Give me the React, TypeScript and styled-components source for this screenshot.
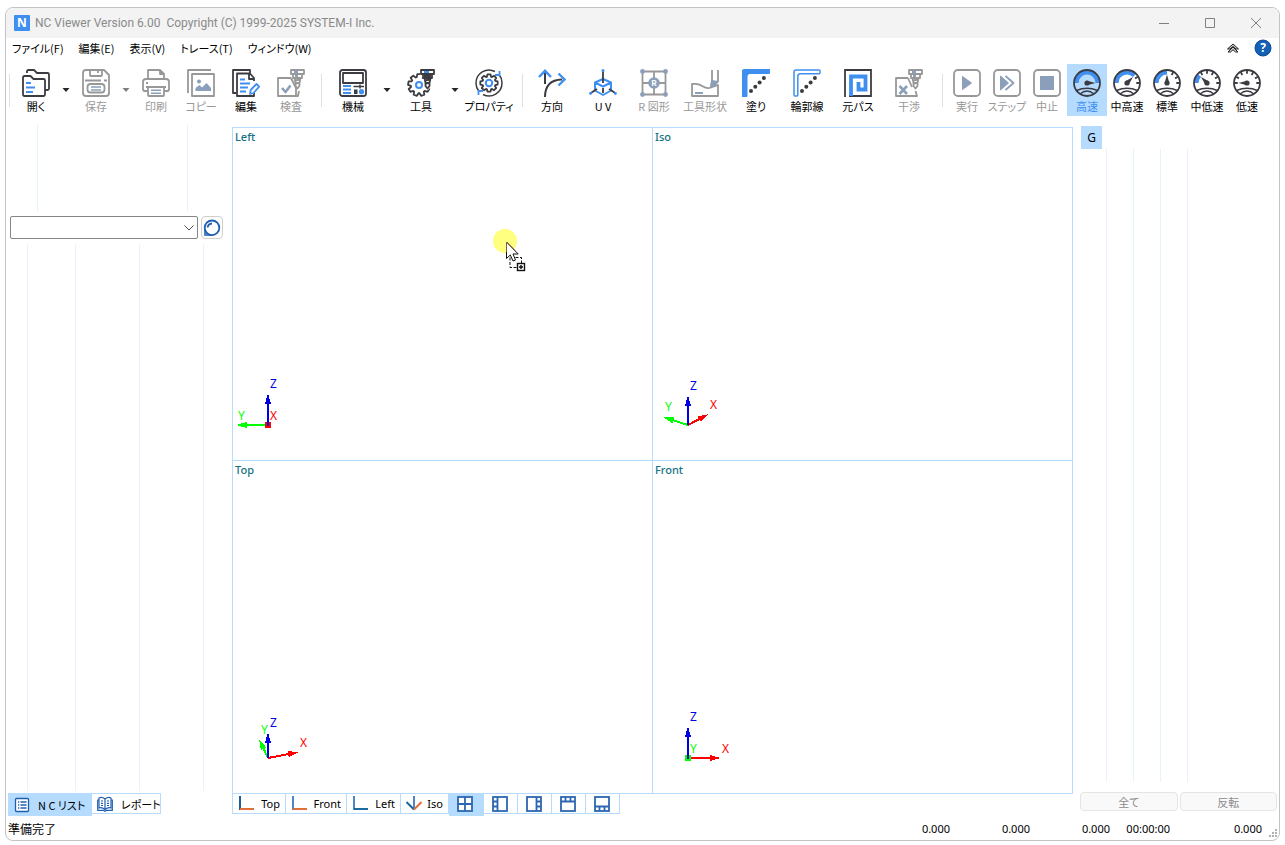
import React from "react";
import styled, { createGlobalStyle, css } from "styled-components";

const LINE = "#b5dbff";
const FAINT = "#e6f2fc";
const BLUE = "#1f5fb0";

const Global = createGlobalStyle`
  *, *::before, *::after { box-sizing: border-box; }
  body {
    margin: 0;
    background: #fff;
    color: #000;
    font-family: "Noto Sans", "Noto Sans CJK JP", sans-serif;
    font-size: 11px;
    font-feature-settings: "palt";
  }
  button { font: inherit; font-feature-settings: inherit; color: inherit; border: 0; padding: 0; background: none; }
  svg { display: block; flex: none; }
`;

const Frame = styled.div`
  padding: 7px 5px 4px;
  min-height: 100vh;
  display: flex;
`;

const Window = styled.div`
  flex: 1;
  min-width: 0;
  display: flex;
  flex-direction: column;
  border: 1px solid #c3c3c3;
  border-radius: 8px;
  overflow: hidden;
  background: #fff;
`;

/* ---------- title bar ---------- */

const TitleBar = styled.header`
  display: flex;
  align-items: center;
  height: 30px;
  padding-left: 8px;
  background: #f3f3f3;
  color: #8a8a8a;
`;

const Logo = styled.span`
  width: 16px;
  height: 16px;
  border-radius: 1px;
  background: #3f8ff0;
  color: #fff;
  font-weight: 700;
  font-size: 12px;
  line-height: 16px;
  text-align: center;
`;

const Title = styled.h1`
  flex: 1;
  margin: 0 0 0 5px;
  font-family: Roboto, "Noto Sans", sans-serif;
  font-size: 12px;
  font-weight: 400;
  line-height: 16px;
  white-space: pre;
`;

const CaptionButton = styled.button`
  width: 46px;
  height: 30px;
  display: grid;
  place-items: center;
`;

/* ---------- menu ---------- */

const MenuBar = styled.nav`
  display: flex;
  align-items: center;
  gap: 15px;
  height: 20px;
  padding: 0 7px 0 6px;
`;

const MenuItem = styled.button`
  font-family: "Noto Sans CJK JP", sans-serif;
  font-size: 11px;
  line-height: 20px;
  white-space: nowrap;
`;

const MenuTools = styled.div`
  display: flex;
  align-items: center;
  gap: 14px;
  height: 18px;
  margin-left: auto;
`;

/* ---------- toolbar ---------- */

const Toolbar = styled.div`
  display: flex;
  align-items: flex-start;
  padding: 6px 0 1px 3px;
  height: 59px;
`;

const ToolGroup = styled.div<{ $gap: number }>`
  display: flex;
  gap: ${(p) => p.$gap}px;
`;

const ToolSeparator = styled.span<{ $before?: number; $after?: number }>`
  width: 1px;
  height: 33px;
  margin: 10px ${(p) => p.$after ?? 4}px 0 ${(p) => p.$before ?? 8}px;
  background: #dcdfe4;
`;

const ToolButton = styled.button<{ $width: number; $active?: boolean }>`
  --ink: #3b3b42;
  --accent: #3f8ff0;
  width: ${(p) => p.$width}px;
  height: 52px;
  padding-top: 5px;
  display: flex;
  flex-direction: column;
  align-items: center;
  white-space: nowrap;
  line-height: 18px;
  font-family: "Noto Sans CJK JP", sans-serif;
  &:disabled {
    --ink: #989898;
    --accent: #8b9fba;
    color: #989898;
  }
  ${(p) =>
    p.$active &&
    css`
      background: ${LINE};
      color: #3f8ff0;
    `}
`;

const DropButton = styled.button<{ $width: number }>`
  width: ${(p) => p.$width}px;
  height: 52px;
  display: grid;
  place-items: center;
  color: #26262c;
  &:disabled { color: #808080; }
`;

/* ---------- body ---------- */

const Body = styled.main`
  flex: 1;
  display: flex;
  min-height: 0;
`;

const LeftPane = styled.aside`
  width: 226px;
  display: flex;
  flex-direction: column;
  padding-top: 8px;
`;

const Columns = styled.div<{ $height?: number }>`
  display: flex;
  ${(p) => (p.$height ? `height: ${p.$height}px;` : "flex: 1;")}
`;

const Column = styled.div<{ $width: number }>`
  width: ${(p) => p.$width}px;
  border-right: 1px solid ${FAINT};
`;

const PickerRow = styled.div`
  display: flex;
  gap: 3px;
  padding: 5px 9px 5px 4px;
`;

const PickerBox = styled.label`
  position: relative;
  flex: 1;
  height: 23px;
  svg {
    position: absolute;
    right: 4px;
    top: 9px;
    pointer-events: none;
  }
`;

const Picker = styled.select`
  appearance: none;
  width: 100%;
  height: 23px;
  border: 1px solid #858585;
  border-radius: 2px;
  background: #fff;
`;

const RoundButton = styled.button`
  width: 22px;
  height: 23px;
  border: 1px solid #cfcfcf;
  border-radius: 4px;
  background: #fdfdfd;
  display: grid;
  place-items: center;
`;

const LeftTabs = styled.div`
  display: flex;
  align-items: flex-start;
  height: 24px;
  margin-top: 2px;
  padding-left: 2px;
`;

const LeftTab = styled.button<{ $active?: boolean }>`
  display: flex;
  align-items: center;
  gap: 8px;
  font-family: "Noto Sans CJK JP", sans-serif;
  line-height: 18px;
  white-space: nowrap;
  ${(p) =>
    p.$active
      ? css`
          width: 84px;
          height: 23px;
          padding-left: 6px;
          background: ${LINE};
        `
      : css`
          width: 69px;
          height: 21px;
          padding-left: 5px;
          border: 1px solid ${LINE};
          border-left: 0;
        `}
`;

const Center = styled.section`
  flex: 1;
  min-width: 0;
  display: flex;
  flex-direction: column;
  padding-top: 10px;
`;

const Views = styled.div`
  flex: 1;
  display: grid;
  grid-template: 1fr 1fr / 1fr 1fr;
  gap: 1px;
  border: 1px solid ${LINE};
  background: ${LINE};
`;

const View = styled.div`
  position: relative;
  background: #fff;
  display: flex;
  flex-direction: column;
  justify-content: space-between;
`;

const ViewName = styled.span`
  padding-left: 2px;
  line-height: 18px;
  font-weight: 500;
  color: #157284;
`;

const Pointer = styled.svg`
  position: absolute;
  left: 260px;
  top: 101px;
`;

const ViewTabs = styled.div`
  display: flex;
  align-items: flex-start;
  height: 23px;
`;

const ViewTab = styled.button<{ $width: number; $active?: boolean; $first?: boolean }>`
  width: ${(p) => p.$width}px;
  height: ${(p) => (p.$active ? 22 : 20)}px;
  display: flex;
  align-items: flex-start;
  justify-content: ${(p) => (p.$active ? "center" : "space-between")};
  padding: 2px 5px 0;
  border: solid ${LINE};
  border-width: ${(p) => (p.$active ? "0" : p.$first ? "0 1px 1px 1px" : "0 1px 1px 0")};
  background: ${(p) => (p.$active ? LINE : "#fff")};
  line-height: 16px;
`;

const LayoutTab = styled(ViewTab)`
  justify-content: flex-start;
  padding-left: 8px;
`;

const RightPane = styled.aside`
  width: 206px;
  display: flex;
  flex-direction: column;
  padding: 9px 2px 6px 7px;
`;

const CodeTab = styled.button`
  width: 21px;
  height: 23px;
  margin-left: 1px;
  background: ${LINE};
  font-size: 12px;
  line-height: 16px;
`;

const ActionRow = styled.div`
  display: grid;
  grid-template-columns: 1fr 1fr;
  gap: 2px;
  margin-top: 10px;
`;

const ActionButton = styled.button`
  height: 19px;
  border: 1px solid #e5e5e5;
  border-radius: 4px;
  background: #f9f9f9;
  color: #8a8a8a;
  font-family: "Noto Sans CJK JP", sans-serif;
  font-size: 11px;
  line-height: 16px;
`;

/* ---------- status bar ---------- */

const StatusBar = styled.footer`
  display: flex;
  align-items: center;
  height: 23px;
  padding-left: 2px;
`;

const StatusText = styled.span`
  flex: 1;
  font-family: "Noto Sans CJK JP", sans-serif;
  font-size: 12px;
  line-height: 18px;
`;

const StatusCell = styled.span<{ $width: number }>`
  width: ${(p) => p.$width}px;
  text-align: right;
`;

const Grip = styled.svg`
  align-self: flex-end;
  margin: 0 1px 2px 7px;
`;

/* ---------- icons ---------- */

const I = "var(--ink)";
const A = "var(--accent)";

function Icon({ children }: { children: React.ReactNode }) {
  return (
    <svg width="28" height="28" viewBox="0 0 28 28" fill="none" stroke={I} strokeWidth="1.8" strokeLinejoin="round" aria-hidden="true">
      {children}
    </svg>
  );
}

const OpenIcon = () => (
  <Icon>
    <path d="M5 4V2.500Q5 1 6.500 1H12L15 4H25.500Q27 4 27 5.500V19.500Q27 21 25.500 21H23" />
    <path d="M1 8.500Q1 7 2.500 7H8.500L11.500 10H21.500Q23 10 23 11.500V25.500Q23 27 21.500 27H2.500Q1 27 1 25.500Z" />
    <path d="M4 14H9M4 18.500H13M4 23H11" stroke={A} />
  </Icon>
);

const SaveIcon = () => (
  <Icon>
    <path d="M1 4Q1 1 4 1H22L27 6V24Q27 27 24 27H4Q1 27 1 24Z" />
    <path d="M8 1V6.500Q8 7 9 7H19Q20 7 20 6V1M16 1V4" />
    <path d="M3 11.500H19M22 11.500H25" />
    <rect x="5.500" y="15" width="17" height="8.500" rx="3" />
    <path d="M9 18H19M9 21H19" stroke={A} strokeWidth="1.400" />
  </Icon>
);

const PrintIcon = () => (
  <Icon>
    <path d="M6 10V1H18L22 5V10M18 1V5H22" />
    <path d="M6 22H2.500Q1 22 1 20V13Q1 10 4 10H24Q27 10 27 13V20Q27 22 25.500 22H22" />
    <path d="M4 14H6M4 18H24" />
    <rect x="6" y="18" width="16" height="9" rx="1" />
    <path d="M9 21.200H19M9 24.200H19" stroke={A} strokeWidth="1.400" />
  </Icon>
);

const CopyIcon = () => (
  <Icon>
    <path d="M1 24V1H24" />
    <rect x="5" y="5" width="22" height="22" />
    <circle cx="12" cy="12.500" r="2" fill={A} stroke="none" />
    <path d="M8.500 22V19L12.500 16L15 18.500L19.500 14L24 19V22Z" fill={A} stroke="none" />
  </Icon>
);

const EditIcon = () => (
  <Icon>
    <path d="M4 24H1V1H18V4" />
    <path d="M22 12V9L18 4.500H5V27H22V24M17 5V10H22" />
    <path d="M8 10.500H13M8 14.500H18M8 18.500H16M8 22.500H14" stroke={A} />
    <path d="M18 25L18.700 21L24.500 15L27.200 17.700L21.500 24Z" stroke={A} fill="#fff" />
  </Icon>
);

const Drill = () => (
  <>
    <path d="M14 1H27V5H14Z" />
    <path d="M16 5V9H25V5M17.500 9L18.500 14H22.500L23.500 9M18.500 14V17L20.500 19.500L22.500 17V14" />
    <path d="M17 3H21M18 7H21" stroke={A} />
    <path d="M18 11.500L23 10.500M18.500 15L22.500 13.500" />
  </>
);

const InspectIcon = () => (
  <Icon>
    <path d="M14 9H1V27H21L22 22" />
    <path d="M14 9L19 19V27" />
    <path d="M5 19L8.500 23L13.500 16.500" stroke={A} strokeWidth="2.600" />
    <Drill />
  </Icon>
);

const MachineIcon = () => (
  <Icon>
    <rect x="1" y="1" width="26" height="26" rx="2.500" />
    <rect x="4" y="4" width="20" height="10" />
    <path d="M4 17H12M4 20.500H12M4 24H12" stroke={A} />
    <path d="M14.500 17.500H25M21 15.500V19.500" strokeWidth="1.500" />
    <rect x="15" y="20.500" width="3.500" height="4.500" fill={I} stroke="none" />
    <circle cx="22.500" cy="22.700" r="2.600" fill={A} stroke="none" />
  </Icon>
);

const gearPath = (cx: number, cy: number, outer: number, inner: number, teeth: number) => {
  const points: string[] = [];
  for (let t = 0; t < teeth; t++) {
    const a = (t / teeth) * Math.PI * 2;
    const w = Math.PI / teeth;
    [
      [inner, -w * 0.8],
      [outer, -w * 0.45],
      [outer, w * 0.45],
      [inner, w * 0.8],
    ].forEach(([r, o]) => points.push(`${(cx + r * Math.sin(a + o)).toFixed(2)} ${(cy - r * Math.cos(a + o)).toFixed(2)}`));
  }
  return `M${points.join("L")}Z`;
};

const ToolIcon = () => (
  <Icon>
    <path d={gearPath(12, 16, 11, 8.2, 9)} />
    <circle cx="12" cy="16" r="3" stroke={A} strokeWidth="2" />
    <path d="M13 0H28V5L25 17L21 21L17 17V9H13Z" fill="#fff" stroke="none" />
    <path d="M14 1H27V5H14Z" />
    <path d="M16 5V9H25V5M17.500 9L18.500 14H22.500L23.500 9M18.500 14V17L20.500 19.500L22.500 17V14" />
    <path d="M17 3H22" stroke={A} />
    <path d="M17 7H24M18 11.500L23 10.500M18.500 15L22.500 13.500" />
  </Icon>
);

const PropertyIcon = () => (
  <Icon>
    <path d={gearPath(14, 14, 8.8, 6.6, 8)} />
    <circle cx="14" cy="14" r="3.200" stroke={A} strokeWidth="2" />
    <path d="M4 22.500A13 13 0 0 1 1 14A13 13 0 0 1 20 2.500M24 5.500A13 13 0 0 1 27 14A13 13 0 0 1 8 25.500" strokeWidth="1.500" />
    <path d="M24.500 2V6H20M3.500 26V22H8" stroke={A} />
  </Icon>
);

const DirectionIcon = () => (
  <Icon>
    <path d="M7 15V3M7 28Q7 11 24 10.500" strokeWidth="2" />
    <path d="M1 8L7 1.800L13 8M20.500 4.500L26.500 10.500L20.500 16.500" stroke={A} strokeWidth="2.400" strokeLinejoin="miter" />
  </Icon>
);

const UvIcon = () => (
  <Icon>
    <path d="M6 13.500L14 10L22 13.500V21.500L14 26L6 21.500ZM6 13.500L14 17.500L22 13.500" stroke={A} strokeWidth="2" />
    <path d="M14 2V14M14 19V24M8 20L1 24.500M20 20L27 24.500" />
    <circle cx="14" cy="1.600" r="1.500" fill={A} stroke="none" />
    <circle cx="1.600" cy="24.500" r="1.400" fill={A} stroke="none" />
    <circle cx="26.400" cy="24.500" r="1.400" fill={A} stroke="none" />
  </Icon>
);

const RShapeIcon = () => (
  <Icon>
    <path d="M2.500 2.500H25.500V25.500H2.500ZM14 2.500V9M14 19V25.500M2.500 14H9M19 14H25.500" />
    <circle cx="14" cy="14" r="5.800" fill={A} stroke="none" />
    <text x="14" y="17" textAnchor="middle" fontSize="8" fontWeight="700" fill="#fff" stroke="none">R</text>
    {[2.5, 25.5].map((x) => [2.5, 25.5].map((y) => <circle key={`${x}-${y}`} cx={x} cy={y} r="2.400" fill={A} stroke="none" />))}
  </Icon>
);

const ToolShapeIcon = () => (
  <Icon>
    <path d="M21 1V12L20 18L24 16L27 12V1" />
    <path d="M1 15Q8 14 12 17.500Q16 20 20 18.500L27 16V27H1Z" />
    <path d="M4 24H12" stroke={A} />
    <path d="M20 18L21 12L26.500 13Z" fill={A} stroke={A} />
  </Icon>
);

const Dots = () => (
  <>
    {[0, 1, 2, 3].map((n) => (
      <circle key={n} cx={9 + n * 4.3} cy={22 - n * 4.3} r="2" fill={I} stroke="none" />
    ))}
  </>
);

const FillIcon = () => (
  <Icon>
    <path d="M0 2Q0 0 2 0H28V4Q28 5 27 5H8Q5.500 5 5.500 8V27Q5.500 28 4.500 28H0Z" fill={A} stroke="none" />
    <Dots />
  </Icon>
);

const OutlineIcon = () => (
  <Icon>
    <path d="M1 3Q1 1 3 1H26Q27 1 27 2V3.800Q27 4.800 26 4.800H7.500Q4.800 4.800 4.800 7.500V26Q4.800 27 3.800 27H2Q1 27 1 26Z" stroke={A} strokeWidth="1.500" />
    <Dots />
  </Icon>
);

const PathIcon = () => (
  <Icon>
    <path d="M1 28V1H27V27H5" strokeLinejoin="miter" />
    <path d="M7 27V7.500H21.500V20.500H14.500V13" stroke={A} strokeWidth="3.800" strokeLinejoin="miter" />
  </Icon>
);

const CollisionIcon = () => (
  <Icon>
    <path d="M13 9H1V27H22L20.500 22M13 9L17 18" />
    <path d="M4.500 17L12 25M12 17L4.500 25" stroke={A} strokeWidth="2.600" />
    <Drill />
  </Icon>
);

const RunIcon = ({ kind }: { kind: "run" | "step" | "stop" }) => (
  <Icon>
    <rect x="1" y="1" width="26" height="26" rx="4" />
    {kind === "run" && <path d="M9.500 7.500L18.500 14L9.500 20.500Z" fill={A} stroke={A} strokeWidth="1" />}
    {kind === "step" && (
      <>
        <path d="M7.500 7L15.500 14L7.500 21Z" fill={A} stroke={A} strokeWidth="1" />
        <path d="M12.500 7L20.500 14L12.500 21" stroke={A} />
      </>
    )}
    {kind === "stop" && <rect x="7" y="7" width="14" height="14" fill={A} stroke="none" />}
  </Icon>
);

const GaugeIcon = ({ angle }: { angle: number }) => {
  const at = (deg: number, r: number): [number, number] => {
    const a = (deg * Math.PI) / 180;
    return [+(14 + r * Math.cos(a)).toFixed(2), +(14 - r * Math.sin(a)).toFixed(2)];
  };
  const [x1, y1] = at(180, 10.6);
  const [x2, y2] = at(angle, 10.6);
  const ticks = [0, 30, 60, 90, 120, 150, 180].filter((t) => t < angle || angle === 180);
  return (
    <Icon>
      {angle < 180 && <path d={`M${x1} ${y1}A10.600 10.600 0 0 1 ${x2} ${y2}`} stroke={A} strokeWidth="4.400" />}
      <circle cx="14" cy="14" r="13" />
      {ticks.map((t) => (
        <path key={t} d={`M${at(t, 12.5).join(" ")}L${at(t, 9.3).join(" ")}`} />
      ))}
      <path d={`M${at(angle + 90, 2.3).join(" ")}L${at(angle, 8.5).join(" ")}L${at(angle - 90, 2.3).join(" ")}Z`} fill={I} stroke="none" />
      <circle cx="14" cy="14" r="2.600" fill={I} stroke="none" />
      <path d="M3.500 21.500Q14 17 24.500 21.500M7 25Q14 19 21 25" strokeWidth="1.500" />
    </Icon>
  );
};

const ArrowDown = () => (
  <svg width="8" height="4" viewBox="0 0 8 4" aria-hidden="true">
    <path d="M0.500 0H7.500L4 4Z" fill="currentColor" />
  </svg>
);

/* ---------- axis triad ---------- */

type Axis = { name: string; color: string; tip: [number, number]; label: [number, number] };

const RED = "#ff0000";
const GREEN = "#00ff00";
const NAVY = "#0000e6";

const Triad = ({ axes, dot }: { axes: Axis[]; dot?: string }) => (
  <svg width="90" height="90" viewBox="0 0 90 90" fontSize="12" fontFamily='"Noto Sans", sans-serif' shapeRendering="crispEdges">
    {axes.map((axis) => {
      const [tx, ty] = axis.tip;
      const len = Math.hypot(tx - 35, ty - 55);
      const ux = len ? (tx - 35) / len : 0;
      const uy = len ? (ty - 55) / len : 0;
      const bx = tx - ux * 11;
      const by = ty - uy * 11;
      return (
        <g key={axis.name} fill={axis.color}>
          {len > 0 && (
            <>
              <path d={`M35 55L${bx + ux * 6} ${by + uy * 6}`} stroke={axis.color} strokeWidth="2" />
              <path d={`M${tx} ${ty}L${bx - uy * 3} ${by + ux * 3}L${bx + uy * 3} ${by - ux * 3}Z`} />
            </>
          )}
          <text x={axis.label[0]} y={axis.label[1]}>{axis.name}</text>
        </g>
      );
    })}
    {dot && (
      <>
        <circle cx="35" cy="55" r="3.500" fill={dot} />
        <path d="M35 48V56" stroke={NAVY} strokeWidth="2" />
      </>
    )}
  </svg>
);

/* ---------- small icons ---------- */

const AxisTabIcon = ({ up, right }: { up: string; right: string }) => (
  <svg width="16" height="16" viewBox="0 0 16 16" fill="none" strokeWidth="2" aria-hidden="true">
    <path d="M2 0V14" stroke={up} />
    <path d="M2 13H16" stroke={right} />
  </svg>
);

const IsoTabIcon = () => (
  <svg width="16" height="16" viewBox="0 0 16 16" fill="none" strokeWidth="2" aria-hidden="true">
    <path d="M8 0V13" stroke="#4f86c8" />
    <path d="M0.500 6L8 13.500" stroke="#1d6a9e" />
    <path d="M15.500 6L8 13.500" stroke="#e0703a" />
  </svg>
);

const layoutPaths = [
  "M8 1V15M1 8H15",
  "M5.500 1V15M1 5.500H5.500M1 10.500H5.500",
  "M10.500 1V15M10.500 5.500H15M10.500 10.500H15",
  "M1 5.500H15M5.500 1V5.500M10.500 1V5.500",
  "M1 10.500H15M5.500 10.500V15M10.500 10.500V15",
];

const LayoutIcon = ({ d }: { d: string }) => (
  <svg width="16" height="16" viewBox="0 0 16 16" fill="none" stroke="#2c66b0" strokeWidth="1.800" aria-hidden="true">
    <rect x="1" y="1" width="14" height="14" fill="#fff" />
    <path d={d} />
  </svg>
);

const ListIcon = () => (
  <svg width="16" height="16" viewBox="0 0 16 16" fill="none" stroke={BLUE} strokeWidth="1.300" aria-hidden="true">
    <rect x="1.500" y="1.500" width="13" height="13" rx="1" fill="#fff" />
    <path d="M4 5H5.300M6.500 5H12.500M4 8H5.300M6.500 8H12.500M4 11H5.300M6.500 11H12.500" />
  </svg>
);

const BookIcon = () => (
  <svg width="16" height="16" viewBox="0 0 16 16" fill="none" stroke={BLUE} strokeWidth="1.200" aria-hidden="true">
    <path d="M8 3Q5 0.500 2 2V12Q5 11 8 13.500Q11 11 14 12V2Q11 0.500 8 3V13.500" />
    <path d="M2 4H0.700V14.300H6.500L8 15.300L9.500 14.300H15.300V4H14M4 5H6M4 7.300H6M4 9.500H6M10 5H12M10 7.300H12M10 9.500H12" />
  </svg>
);

/* ---------- data ---------- */

type Tool = { label: string; icon: React.ReactNode; off?: boolean; drop?: boolean; active?: boolean };

const fileTools: Tool[] = [
  { label: "開く", icon: <OpenIcon />, drop: true },
  { label: "保存", icon: <SaveIcon />, off: true, drop: true },
  { label: "印刷", icon: <PrintIcon />, off: true },
  { label: "コピー", icon: <CopyIcon />, off: true },
  { label: "編集", icon: <EditIcon /> },
  { label: "検査", icon: <InspectIcon />, off: true },
];

const setupTools: Tool[] = [
  { label: "機械", icon: <MachineIcon />, drop: true },
  { label: "工具", icon: <ToolIcon />, drop: true },
  { label: "プロパティ", icon: <PropertyIcon /> },
];

const drawTools: Tool[] = [
  { label: "方向", icon: <DirectionIcon /> },
  { label: "U V", icon: <UvIcon /> },
  { label: "R 図形", icon: <RShapeIcon />, off: true },
  { label: "工具形状", icon: <ToolShapeIcon />, off: true },
  { label: "塗り", icon: <FillIcon /> },
  { label: "輪郭線", icon: <OutlineIcon /> },
  { label: "元パス", icon: <PathIcon /> },
  { label: "干渉", icon: <CollisionIcon />, off: true },
];

const playTools: Tool[] = [
  { label: "実行", icon: <RunIcon kind="run" />, off: true },
  { label: "ステップ", icon: <RunIcon kind="step" />, off: true },
  { label: "中止", icon: <RunIcon kind="stop" />, off: true },
  { label: "高速", icon: <GaugeIcon angle={0} />, active: true },
  { label: "中高速", icon: <GaugeIcon angle={45} /> },
  { label: "標準", icon: <GaugeIcon angle={90} /> },
  { label: "中低速", icon: <GaugeIcon angle={135} /> },
  { label: "低速", icon: <GaugeIcon angle={180} /> },
];

const Tools = ({ items, width, gap, drop = 14 }: { items: Tool[]; width: number; gap: number; drop?: number }) => (
  <ToolGroup $gap={gap}>
    {items.map((tool) => (
      <React.Fragment key={tool.label}>
        <ToolButton $width={width} $active={tool.active} disabled={tool.off}>
          {tool.icon}
          {tool.label}
        </ToolButton>
        {tool.drop && (
          <DropButton $width={drop} disabled={tool.off} aria-label={`${tool.label} ▼`}>
            <ArrowDown />
          </DropButton>
        )}
      </React.Fragment>
    ))}
  </ToolGroup>
);

const views: { name: string; axes: Axis[]; dot?: string; pointer?: boolean }[] = [
  {
    name: "Left",
    dot: RED,
    pointer: true,
    axes: [
      { name: "Y", color: GREEN, tip: [3, 55], label: [5, 50] },
      { name: "X", color: RED, tip: [35, 55], label: [37, 50] },
      { name: "Z", color: NAVY, tip: [35, 23], label: [37, 18] },
    ],
  },
  {
    name: "Iso",
    axes: [
      { name: "Y", color: GREEN, tip: [10, 47], label: [12, 41] },
      { name: "X", color: RED, tip: [56, 44], label: [57, 39] },
      { name: "Z", color: NAVY, tip: [35, 25], label: [37, 20] },
    ],
  },
  {
    name: "Top",
    axes: [
      { name: "Y", color: GREEN, tip: [26, 36], label: [28, 31] },
      { name: "X", color: RED, tip: [66, 49], label: [67, 44] },
      { name: "Z", color: NAVY, tip: [35, 29], label: [37, 24] },
    ],
  },
  {
    name: "Front",
    dot: GREEN,
    axes: [
      { name: "X", color: RED, tip: [68, 55], label: [69, 50] },
      { name: "Y", color: GREEN, tip: [35, 55], label: [37, 50] },
      { name: "Z", color: NAVY, tip: [35, 23], label: [37, 18] },
    ],
  },
];

const captionButtons = [
  { label: "最小化", d: "M0 5.500H10" },
  { label: "最大化", d: "M0.500 0.500H9.500V9.500H0.500Z" },
  { label: "閉じる", d: "M0 0L10 10M10 0L0 10" },
];

export default function App() {
  return (
    <Frame>
      <Global />
      <Window>
        <TitleBar>
          <Logo>N</Logo>
          <Title>{"NC Viewer Version 6.00  Copyright (C) 1999-2025 SYSTEM-I Inc."}</Title>
          {captionButtons.map((b) => (
            <CaptionButton key={b.label} aria-label={b.label}>
              <svg width="10" height="10" viewBox="0 0 10 10" fill="none" stroke="#808080" aria-hidden="true">
                <path d={b.d} />
              </svg>
            </CaptionButton>
          ))}
        </TitleBar>

        <MenuBar>
          {["ファイル(F)", "編集(E)", "表示(V)", "トレース(T)", "ウィンドウ(W)"].map((m) => (
            <MenuItem key={m}>{m}</MenuItem>
          ))}
          <MenuTools>
            <button aria-label="リボンを折りたたむ">
              <svg width="14" height="10" viewBox="0 0 14 10" fill="#c8c8c8" stroke="#222" aria-hidden="true">
                <path d="M7 1L12.500 6H10L7 3.500L4 6H1.500Z" />
                <path d="M7 4L12 9H9.500L7 6.800L4.500 9H2Z" />
              </svg>
            </button>
            <button aria-label="ヘルプ">
              <svg width="18" height="18" viewBox="0 0 18 18" aria-hidden="true">
                <circle cx="9" cy="9" r="8" fill="#1460b4" stroke="#0b4a94" />
                <text x="9" y="13" textAnchor="middle" fontSize="12" fontWeight="700" fill="#fff">?</text>
              </svg>
            </button>
          </MenuTools>
        </MenuBar>

        <Toolbar>
          <ToolSeparator $before={0} />
          <Tools items={fileTools} width={44} gap={1} />
          <ToolSeparator $after={9} />
          <Tools items={setupTools} width={44} gap={4} drop={16} />
          <ToolSeparator $before={11} />
          <Tools items={drawTools} width={50} gap={1} />
          <ToolSeparator />
          <Tools items={playTools} width={40} gap={0} />
        </Toolbar>

        <Body>
          <LeftPane>
            <Columns $height={86}>
              <Column $width={32} />
              <Column $width={150} />
            </Columns>
            <PickerRow>
              <PickerBox>
                <Picker aria-label="NCリスト" />
                <svg width="10" height="6" viewBox="0 0 10 6" fill="none" stroke="#555" aria-hidden="true">
                  <path d="M0.500 0.500L5 5L9.500 0.500" />
                </svg>
              </PickerBox>
              <RoundButton aria-label="表示">
                <svg width="18" height="18" viewBox="0 0 18 18" fill="none" stroke={BLUE} strokeWidth="1.800" aria-hidden="true">
                  <path d="M1 8V17H11Z" fill="#4f86c8" stroke="none" />
                  <circle cx="9" cy="8.800" r="7.300" fill="#fff" />
                  <path d="M4.500 8.500Q5 5 9 4.500" />
                </svg>
              </RoundButton>
            </PickerRow>
            <Columns>
              {[22, 48, 64, 64].map((w, i) => (
                <Column key={i} $width={w} />
              ))}
            </Columns>
            <LeftTabs>
              <LeftTab $active>
                <ListIcon />N C リスト
              </LeftTab>
              <LeftTab>
                <BookIcon />
                レポート
              </LeftTab>
            </LeftTabs>
          </LeftPane>

          <Center>
            <Views>
              {views.map((v) => (
                <View key={v.name}>
                  <ViewName>{v.name}</ViewName>
                  <Triad axes={v.axes} dot={v.dot} />
                  {v.pointer && (
                    <Pointer width="34" height="44" viewBox="0 0 34 44" aria-hidden="true">
                      <circle cx="12" cy="12" r="12" fill="#ffff80" />
                      <path d="M17 28.500V38.500H24M18 28.500H28.500V34" fill="none" stroke="#111" strokeDasharray="3 1.500" />
                      <path d="M13.500 13V29.500L17.300 26L20 32L22.500 31L20 25H25.200Z" fill="#fff" stroke="#111" />
                      <path d="M13.500 23V13L22 21.500" fill="none" stroke="#8a5a3c" />
                      <rect x="24.500" y="34.500" width="7" height="7" fill="#fff" stroke="#111" strokeWidth="1.400" />
                      <path d="M28 36V40M26 38H30" stroke="#111" strokeWidth="1.400" />
                    </Pointer>
                  )}
                </View>
              ))}
            </Views>
            <ViewTabs>
              <ViewTab $width={54} $first>
                <AxisTabIcon up="#1d5f9e" right="#e0703a" />
                Top
              </ViewTab>
              <ViewTab $width={61}>
                <AxisTabIcon up="#4f86c8" right="#e0703a" />
                Front
              </ViewTab>
              <ViewTab $width={54}>
                <AxisTabIcon up="#4f86c8" right="#1d6a9e" />
                Left
              </ViewTab>
              <ViewTab $width={48}>
                <IsoTabIcon />
                Iso
              </ViewTab>
              {layoutPaths.map((d, i) => (
                <LayoutTab key={d} $width={i === 0 ? 35 : 34} $active={i === 0} aria-label={`Layout ${i + 1}`}>
                  <LayoutIcon d={d} />
                </LayoutTab>
              ))}
            </ViewTabs>
          </Center>

          <RightPane>
            <CodeTab>G</CodeTab>
            <Columns>
              {[0, 1, 2, 3].map((i) => (
                <Column key={i} $width={27} />
              ))}
            </Columns>
            <ActionRow>
              <ActionButton disabled>全て</ActionButton>
              <ActionButton disabled>反転</ActionButton>
            </ActionRow>
          </RightPane>
        </Body>

        <StatusBar>
          <StatusText>準備完了</StatusText>
          <StatusCell $width={80}>0.000</StatusCell>
          <StatusCell $width={80}>0.000</StatusCell>
          <StatusCell $width={80}>0.000</StatusCell>
          <StatusCell $width={60}>00:00:00</StatusCell>
          <StatusCell $width={92}>0.000</StatusCell>
          <Grip width="9" height="9" viewBox="0 0 9 9" fill="#b0b0b0" aria-hidden="true">
            <path d="M6 0H8V2H6ZM3 3H5V5H3ZM6 3H8V5H6ZM0 6H2V8H0ZM3 6H5V8H3ZM6 6H8V8H6Z" />
          </Grip>
        </StatusBar>
      </Window>
    </Frame>
  );
}
